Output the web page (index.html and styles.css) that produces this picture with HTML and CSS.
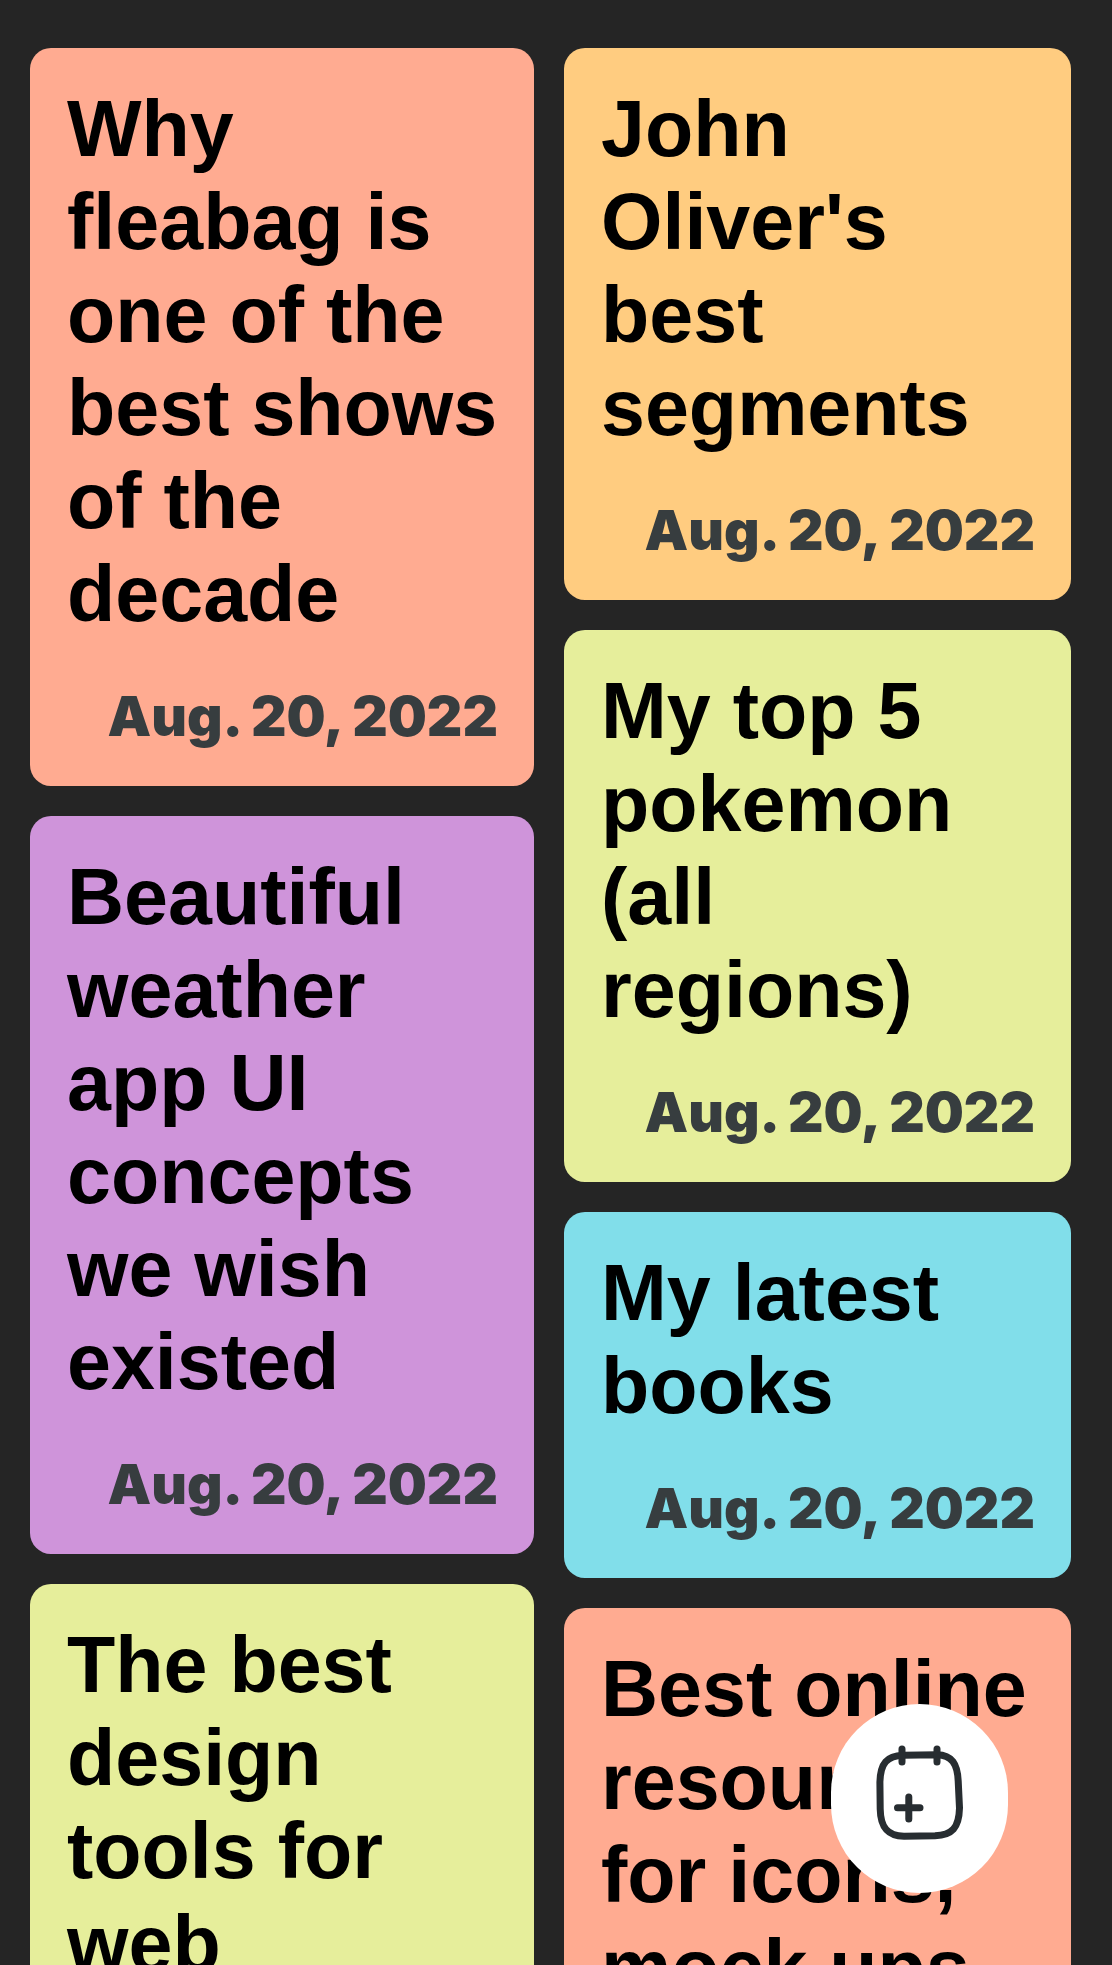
FILE: index.html
```html
<!DOCTYPE html>
<html lang="en">
<head>
<meta charset="utf-8">
<meta name="viewport" content="width=device-width, initial-scale=1">
<title>Notes</title>
<link rel="stylesheet" href="styles.css">
</head>
<body>
<main class="board">
  <div class="column">
    <article class="note note-coral">
      <h2 class="note-title">Why fleabag is one of the best shows of the decade</h2>
      <time class="note-date" datetime="2022-08-20">Aug. 20, 2022</time>
    </article>
    <article class="note note-purple">
      <h2 class="note-title">Beautiful weather app UI concepts we wish existed</h2>
      <time class="note-date" datetime="2022-08-20">Aug. 20, 2022</time>
    </article>
    <article class="note note-lime">
      <h2 class="note-title">The best design tools for web</h2>
      <time class="note-date" datetime="2022-08-20">Aug. 20, 2022</time>
    </article>
  </div>
  <div class="column">
    <article class="note note-amber">
      <h2 class="note-title">John Oliver's best segments</h2>
      <time class="note-date" datetime="2022-08-20">Aug. 20, 2022</time>
    </article>
    <article class="note note-lime">
      <h2 class="note-title">My top 5 pokemon (all regions)</h2>
      <time class="note-date" datetime="2022-08-20">Aug. 20, 2022</time>
    </article>
    <article class="note note-cyan">
      <h2 class="note-title">My latest books</h2>
      <time class="note-date" datetime="2022-08-20">Aug. 20, 2022</time>
    </article>
    <article class="note note-coral">
      <h2 class="note-title">Best online resources for icons, mock ups</h2>
      <time class="note-date" datetime="2022-08-20">Aug. 20, 2022</time>
    </article>
  </div>
</main>
<button class="add-button" type="button" aria-label="Add note">
  <svg class="add-icon" viewBox="42 36 93 117" aria-hidden="true">
    <path d="M72 51.3 L106 50.7 C121 51 126.5 60 127.2 77 L128.5 104 C128 124 121 131 104 131.8 L73 132.3 C56 132 49.5 123 49.2 105 L48.9 78 C49.5 59 56 52 72 51.3 Z"/>
    <path d="M71 45 V58 M106 45 V58 M77.8 93 V115 M66.5 103.8 H89"/>
  </svg>
</button>
</body>
</html>
```
FILE: styles.css
```css
* {
  box-sizing: border-box;
}

body {
  margin: 0;
  background: #252525;
  color: #000;
  font-family: "Liberation Sans", Arial, sans-serif;
}

.board {
  display: grid;
  grid-template-columns: 504fr 507fr;
  gap: 30px;
  height: 100vh;
  padding: 48px 41px 48px 30px;
  overflow-y: auto;
  scrollbar-width: none;
}

.column {
  display: flex;
  flex-direction: column;
  gap: 30px;
  min-width: 0;
}

.note {
  display: flex;
  flex-direction: column;
  flex-shrink: 0;
  gap: 38px;
  padding: 34px 36px 32px 37px;
  border-radius: 21px;
}

.note-coral { background: #ffab91; }
.note-amber { background: #ffcc80; }
.note-lime { background: #e6ee9b; }
.note-purple { background: #cf94da; }
.note-cyan { background: #81deea; }

.note-title {
  margin: 0;
  font-size: 79px;
  font-weight: 700;
  line-height: 93px;
}

.note-date {
  color: #373d3f;
  font-family: "Arial Black", Inter, sans-serif;
  font-size: 55px;
  font-weight: 900;
  line-height: 76px;
  text-align: right;
  white-space: nowrap;
}

.add-button {
  position: fixed;
  right: 104px;
  bottom: 72px;
  display: flex;
  align-items: center;
  justify-content: center;
  width: 177px;
  height: 189px;
  padding: 0;
  border: 0;
  border-radius: 100px;
  background: #fff;
  cursor: pointer;
}

.add-icon {
  width: 93px;
  height: 117px;
  fill: none;
  stroke: #272d31;
  stroke-width: 7;
  stroke-linecap: round;
  stroke-linejoin: round;
}
```
